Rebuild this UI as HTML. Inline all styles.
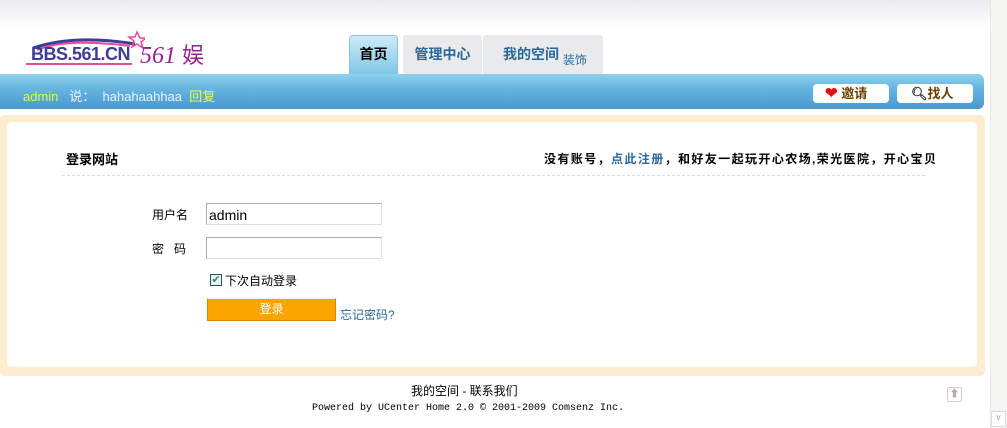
<!DOCTYPE html><html><head><meta charset="utf-8"><style>
*{margin:0;padding:0;box-sizing:border-box}
body{width:1007px;height:428px;background:#fff;font-family:"Liberation Sans","Noto Sans CJK SC",sans-serif;font-size:12px;position:relative;overflow:hidden}
.a{position:absolute}
</style></head><body>
<div class="a" style="left:0;top:0;width:990px;height:30px;background:linear-gradient(#eaebee,#fff)"></div>
<svg class="a" style="left:25px;top:28px" width="120" height="24"><path d="M8 20 Q50 6 110 16" stroke="#3b3d96" stroke-width="3" fill="none"/><path d="M12 22 Q40 10 105 18" stroke="#e84a9a" stroke-width="2" fill="none"/><path d="M112 4 l3 6 6 0-5 4 2 6-6-4-5 3 2-6-5-4 6 0z" fill="none" stroke="#e84a9a" stroke-width="1.5"/></svg>
<div class="a" style="left:31px;top:44px;font:bold 18px 'Liberation Sans',sans-serif;color:#3b3d96;letter-spacing:-0.5px">BBS.561.CN</div>
<div class="a" style="left:26px;top:63px;width:106px;height:2px;background:#e84a9a"></div>
<div class="a" style="left:140px;top:38px;font:italic 24px 'Liberation Serif',serif;color:#9a1f8e">561 <span style="font-family:'Noto Sans CJK SC';font-style:normal;font-size:22px">娱</span></div>
<div class="a" style="left:349px;top:35px;width:49px;height:42px;background:linear-gradient(#cfeaf7,#7cc4e6);border:1px solid #8cc4e0;border-radius:4px 4px 0 0;font-weight:bold;font-size:14px;text-align:center;line-height:36px;color:#000">首页</div>
<div class="a" style="left:403px;top:35px;width:79px;height:39px;background:#e9eaec;border-radius:3px 3px 0 0;font-weight:bold;font-size:14px;text-align:center;line-height:38px;color:#2a6899">管理中心</div>
<div class="a" style="left:483px;top:35px;width:120px;height:39px;background:#e9eaec;border-radius:3px 3px 0 0;font-weight:bold;font-size:14px;line-height:38px;color:#2a6899;padding-left:20px">我的空间 <span style="font-size:12px;font-weight:normal;position:relative;top:5px">装饰</span></div>
<div class="a" style="left:0;top:74px;width:984px;height:35px;background:linear-gradient(#8fd0ef,#67b6e0 40%,#4a97d0);border-radius:0 6px 6px 0"></div>
<div class="a" style="left:23px;top:86px;font-size:13px;"><span style="color:#d6ff3a">admin</span>&nbsp;&nbsp;&nbsp;<span style="color:#e6f4ff">说：&nbsp;&nbsp;hahahaahhaa</span>&nbsp;&nbsp;<span style="color:#e8ff40">回复</span></div>
<div class="a" style="left:813px;top:84px;width:76px;height:19px;background:#fff;border-radius:4px;font-weight:bold;font-size:13px;color:#6b4000;line-height:19px;padding-left:12px"><span style="color:#e01010;font-size:15px">❤</span> 邀请</div>
<div class="a" style="left:897px;top:84px;width:76px;height:19px;background:#fff;border-radius:4px;font-weight:bold;font-size:13px;color:#6b4000;line-height:19px;padding-left:14px"><span style="color:#333">🔍︎</span>找人</div>
<div class="a" style="left:0;top:115px;width:985px;height:261px;background:#fdeccf;border-radius:5px"></div>
<div class="a" style="left:7px;top:122px;width:970px;height:245px;background:#fff;border-radius:5px"></div>
<div class="a" style="left:66px;top:149px;font-weight:bold;font-size:13px">登录网站</div>
<div class="a" style="left:544px;top:150px;font-weight:bold;font-size:12px;letter-spacing:1.4px">没有账号，<span style="color:#2a6899">点此注册</span>，和好友一起玩开心农场,荣光医院，开心宝贝</div>
<div class="a" style="left:62px;top:175px;width:863px;border-top:1px dashed #dcdcdc"></div>
<div class="a" style="left:152px;top:206px">用户名</div>
<div class="a" style="left:206px;top:203px;width:176px;height:22px;border:1px solid #aaa;border-right-color:#ddd;border-bottom-color:#ddd;font-size:14px;padding:3px 2px">admin</div>
<div class="a" style="left:152px;top:240px">密&nbsp;&nbsp;&nbsp;码</div>
<div class="a" style="left:206px;top:237px;width:176px;height:22px;border:1px solid #aaa;border-right-color:#ddd;border-bottom-color:#ddd"></div>
<div class="a" style="left:210px;top:274px;width:12px;height:12px;border:1px solid #1c5180;background:#eef;color:#2a9a2a;font-size:11px;line-height:10px;text-align:center">✔</div>
<div class="a" style="left:225px;top:272px">下次自动登录</div>
<div class="a" style="left:207px;top:298px;width:129px;height:23px;background:#fca500;border:1px solid #d28a00;border-top-color:#eee;color:#fff;text-align:center;line-height:20px">登录</div>
<div class="a" style="left:340px;top:306px;color:#2a6899">忘记密码?</div>
<div class="a" style="left:411px;top:382px">我的空间 - 联系我们</div>
<div class="a" style="left:312px;top:403px;font:10px 'Liberation Mono',monospace">Powered by UCenter Home 2.0 © 2001-2009 Comsenz Inc.</div>
<div class="a" style="left:947px;top:387px;width:15px;height:15px;border:1px solid #d8c8c8;border-radius:2px;color:#c0a8a8;font-size:10px;text-align:center;line-height:13px">⬆</div>
<div class="a" style="left:990px;top:0;width:17px;height:428px;background:#f5f5f1;border-left:1px solid #e8e8e4"></div>
<div class="a" style="left:991px;top:411px;width:15px;height:16px;background:#fff;border:1px solid #ddd;color:#aab;font-size:9px;text-align:center">v</div>
</body></html>
